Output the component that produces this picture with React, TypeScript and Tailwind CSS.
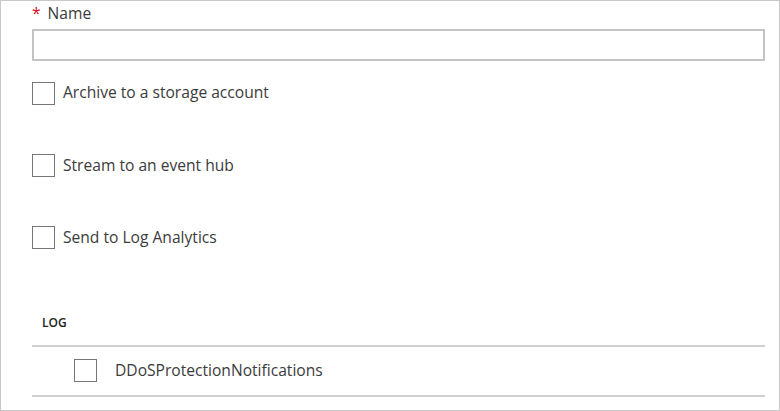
const font = { fontFamily: '"Segoe UI", "Open Sans", "Noto Sans", sans-serif' }

function Check({ label }: { label: string }) {
  return (
    <label className="flex items-center gap-[8px]">
      <span className="block h-[23px] w-[23px] border border-[#767676] bg-white" />
      <span className="text-[15.6px] text-[#3b3b3b]">{label}</span>
    </label>
  )
}

export default function App() {
  return (
    <div
      className="h-[411px] w-[780px] border border-[#c8c8c8] bg-white pl-[31px] pr-[14px]"
      style={font}
    >
      <div className="flex items-center gap-[7px] pt-[1px] text-[15.6px] text-[#3b3b3b]">
        <span className="text-[#e00b1c]">*</span>
        <span>Name</span>
      </div>
      <input
        type="text"
        className="mt-[4px] block h-[32px] w-full border-2 border-[#c4c4c4] bg-white outline-none"
      />
      <div className="mt-[20px] flex flex-col gap-[49px]">
        <Check label="Archive to a storage account" />
        <Check label="Stream to an event hub" />
        <Check label="Send to Log Analytics" />
      </div>
      <div className="mt-[64px] pl-[10px] text-[12px] font-semibold text-[#222]">LOG</div>
      <div className="mt-[13px] border-t-2 border-[#d0d0d0]">
        <div className="flex h-[48px] items-center gap-[18px] pl-[42px]">
          <span className="block h-[23px] w-[23px] border border-[#767676] bg-white" />
          <span className="text-[15.6px] text-[#3b3b3b]">DDoSProtectionNotifications</span>
        </div>
      </div>
      <div className="border-t-2 border-[#d0d0d0]" />
    </div>
  )
}
